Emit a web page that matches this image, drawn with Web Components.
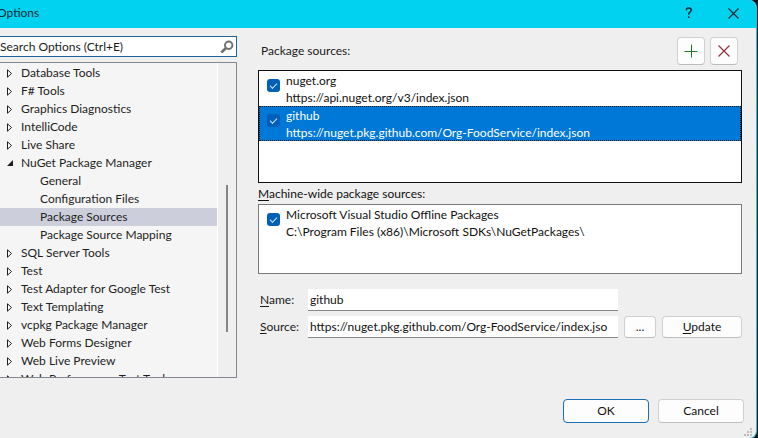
<!DOCTYPE html>
<html lang="en">
<head>
<meta charset="utf-8">
<title>Options</title>
<style>
  html, body { height: 100%; margin: 0; overflow: hidden; }
  body {
    background: linear-gradient(#04181f, #043240 30%, #03262f 60%, #041a22);
    font: 12px/18px Lato, "Open Sans", "Liberation Sans", sans-serif;
    color: #1b1b1b;
  }
</style>
</head>
<body>
<options-dialog></options-dialog>
<script>
const define = (name, html, setup) => {
  const template = document.createElement('template');
  template.innerHTML = '<style>*{box-sizing:border-box}</style>' + html;
  customElements.define(name, class extends HTMLElement {
    constructor() {
      super();
      this.attachShadow({ mode: 'open' }).append(template.content.cloneNode(true));
    }
    connectedCallback() { if (setup) setup(this, this.shadowRoot); }
  });
};

define('title-bar', `
<style>
  :host { display: flex; align-items: center; height: 28px; padding: 0 0 2px 8px; background: #00d2f0; color: #0d2b33; }
  h1 { flex: 1; margin: 0; font: inherit; }
  button { width: 45px; height: 25px; padding: 0; border: 0; background: none; color: #062a33; display: grid; place-items: center; }
</style>
<h1><slot></slot></h1>
<button aria-label="Help"><svg width="8" height="12" viewBox="0 0 8 12" fill="none" stroke="currentColor" stroke-width="1.5"><path d="M1.5 3.2V1.8Q2.4 1 3.8 1Q6.2 1 6.2 3Q6.2 4.300 4.900 5.200Q3.700 6 3.700 7.400V7.800M3.700 9.300V11"/></svg></button>
<button aria-label="Close"><svg width="11" height="11" viewBox="0 0 11 11" stroke="currentColor" stroke-width="1.2"><path d="M.5 .5L10.500 10.500M10.500 .5L.5 10.500"/></svg></button>`);

define('search-box', `
<style>
  :host { display: flex; align-items: center; height: 21px; border: 1px solid #1f6499; background: #fff; padding: 0 2px; }
  input { flex: 1; min-width: 0; height: 18px; padding: 0; border: 0; outline: 0; background: none; font: inherit; color: #1b1b1b; }
  input::placeholder { color: #1b1b1b; opacity: 1; }
</style>
<input type="text" aria-label="Search Options" placeholder="Search Options (Ctrl+E)">
<svg width="14" height="14" viewBox="0 0 14 14" fill="none" stroke="#717171" aria-hidden="true"><circle cx="8.700" cy="5.200" r="3.700" stroke-width="2"/><path d="M6 8L1.300 12.500" stroke-width="2.600"/></svg>`);

define('tree-item', `
<style>
  :host { display: flex; align-items: center; height: 18px; flex: none; padding-left: 9px; white-space: nowrap; color: #1e1e1e; }
  :host([level="2"]) { padding-left: 28px; }
  :host([selected]) { background: #cccedb; }
  .arrow { width: 14px; height: 9px; display: flex; }
  .open { display: none; }
  :host([expanded]) .open { display: block; }
  :host([expanded]) .closed { display: none; }
  :host([level="2"]) svg { display: none; }
</style>
<span class="arrow" aria-hidden="true">
  <svg class="closed" width="7" height="9" viewBox="0 0 7 9" fill="#fff" stroke="#1e1e1e"><path d="M.5 .8V8.200L4.500 4.500Z"/></svg>
  <svg class="open" width="7" height="9" viewBox="0 0 7 9" fill="#1e1e1e"><path d="M6 1V7H0Z"/></svg>
</span>
<slot></slot>`, el => el.setAttribute('role', 'treeitem'));

define('nav-tree', `
<style>
  :host { display: flex; min-height: 0; border: 1px solid #828790; background: #f5f5f5; overflow: hidden; }
  .items { flex: 1; display: flex; flex-direction: column; min-width: 0; min-height: 0; padding-top: 1px; overflow: hidden; }
  .bar { flex: none; width: 19px; border-left: 1px solid #fff; background: #efefef; display: grid; grid-template-rows: 122fr 146fr 45fr; justify-items: center; }
  .thumb { grid-row: 2; width: 2px; background: #858585; }
</style>
<div class="items" role="tree" aria-label="Option pages"><slot></slot></div>
<div class="bar" aria-hidden="true"><div class="thumb"></div></div>`);

define('source-item', `
<style>
  :host { display: block; padding: 1px 1px 0; color: #111; }
  label { display: grid; grid-template-columns: 13px 1fr; gap: 6px; align-items: start; padding-left: 7px; line-height: 17px; }
  input { appearance: none; width: 13px; height: 13px; margin: 7px 0 0; border-radius: 3px; background: #005fb8; display: grid; place-items: center; }
  input:checked::before { content: ""; width: 6px; height: 3px; border: solid #cfe4f7; border-width: 0 0 1px 1px; transform: rotate(-45deg); margin-bottom: 2px; }
  .text { display: block; min-width: 0; white-space: nowrap; }
  .text span { display: block; }
  :host([selected]) { background: #0078d7; outline: 1px dotted #20160c; outline-offset: -1px; color: #fff; }
</style>
<label><input type="checkbox" checked><span class="text"><span class="name"></span><span class="url"></span></span></label>`,
(el, root) => {
  root.querySelector('.name').textContent = el.getAttribute('name');
  root.querySelector('.url').textContent = el.getAttribute('url');
});

define('source-list', `
<style>
  :host { display: block; border: 1px solid #7a7a7a; background: #fff; overflow: hidden; }
  :host([focused]) { border-color: #111; }
</style>
<slot></slot>`);

define('push-button', `
<style>
  :host { display: flex; height: 22px; }
  button { flex: 1; padding: 0; border: 1px solid #d0d0d0; border-bottom-color: #bcbcbc; border-radius: 4px; background: #fdfdfd; font: inherit; color: #111; display: flex; align-items: center; justify-content: center; }
  :host([primary]) button { border-color: #1a6fb5; }
</style>
<button><slot></slot></button>`, (el, root) => {
  if (el.title) root.querySelector('button').setAttribute('aria-label', el.title);
});

define('text-field', `
<style>
  :host { display: grid; grid-template-columns: 50px 1fr; align-items: center; min-width: 0; }
  label { padding-left: 2px; }
  label::first-letter { text-decoration: underline; text-underline-offset: 2px; }
  input { width: 100%; min-width: 0; height: 22px; padding: 0 3px 0 2px; border: 0; border-bottom: 1px solid #868686; border-radius: 0; outline: 0; background: #fff; font: inherit; color: #111; }
</style>
<label for="field"></label><input id="field" type="text">`, (el, root) => {
  root.querySelector('label').textContent = el.getAttribute('label');
  root.querySelector('input').value = el.getAttribute('value');
});

define('options-dialog', `
<style>
  :host { display: flex; flex-direction: column; height: 100vh; margin: 0 1px 0 -12px; border: solid #35bccb; border-width: 0 1px 1px; border-radius: 0 8px 8px 0; background: #efefef; overflow: hidden; position: relative; }
  .body { flex: 1; min-height: 0; display: grid; grid-template-columns: 240px 1fr; gap: 21px; padding: 8px 14px 21px 8px; }
  .left { display: flex; flex-direction: column; gap: 5px; min-height: 0; }
  nav-tree { flex: 1; }
  .right { display: flex; flex-direction: column; min-width: 0; }
  .head { display: flex; align-items: center; gap: 5px; padding: 1px 4px 5px 3px; }
  .head span { flex: 1; }
  .head push-button { width: 28px; height: 28px; }
  .sources { height: 113px; flex: none; }
  .machine { height: 70px; flex: none; }
  h2 { margin: 0; font: inherit; line-height: 21px; color: #111; }
  u { text-underline-offset: 2px; }
  .form { display: grid; grid-template-columns: 1fr 32px 80px; column-gap: 6px; row-gap: 5px; padding-top: 15px; }
  .name { grid-area: 1 / 1; }
  .source { grid-area: 2 / 1; }
  .form push-button { grid-row: 2; }
  footer { display: flex; justify-content: flex-end; gap: 9px; padding: 0 12px 15px; }
  footer push-button { width: 86px; height: 24px; }
  .grip { position: absolute; right: 3px; bottom: 1px; }
</style>
<title-bar>Options</title-bar>
<div class="body">
  <div class="left">
    <search-box></search-box>
    <nav-tree>
      <tree-item>Database Tools</tree-item>
      <tree-item>F# Tools</tree-item>
      <tree-item>Graphics Diagnostics</tree-item>
      <tree-item>IntelliCode</tree-item>
      <tree-item>Live Share</tree-item>
      <tree-item expanded>NuGet Package Manager</tree-item>
      <tree-item level="2">General</tree-item>
      <tree-item level="2">Configuration Files</tree-item>
      <tree-item level="2" selected>Package Sources</tree-item>
      <tree-item level="2">Package Source Mapping</tree-item>
      <tree-item>SQL Server Tools</tree-item>
      <tree-item>Test</tree-item>
      <tree-item>Test Adapter for Google Test</tree-item>
      <tree-item>Text Templating</tree-item>
      <tree-item>vcpkg Package Manager</tree-item>
      <tree-item>Web Forms Designer</tree-item>
      <tree-item>Web Live Preview</tree-item>
      <tree-item>Web Performance Test Tools</tree-item>
    </nav-tree>
  </div>
  <div class="right">
    <div class="head">
      <span>Package sources:</span>
      <push-button title="Add"><svg width="14" height="14" viewBox="0 0 14 14" stroke="#1f7a2c"><path d="M.5 7.500H13.500M7.500 .5V13.500"/></svg></push-button>
      <push-button title="Remove"><svg width="12" height="12" viewBox="0 0 12 12" stroke="#93353a" stroke-width="1.200"><path d="M.5 .5L11.500 11.500M11.500 .5L.5 11.500"/></svg></push-button>
    </div>
    <source-list class="sources" focused>
      <source-item name="nuget.org" url="https://api.nuget.org/v3/index.json"></source-item>
      <source-item selected name="github" url="https://nuget.pkg.github.com/Org-FoodService/index.json"></source-item>
    </source-list>
    <h2><u>M</u>achine-wide package sources:</h2>
    <source-list class="machine">
      <source-item name="Microsoft Visual Studio Offline Packages" url="C:\\Program Files (x86)\\Microsoft SDKs\\NuGetPackages\\"></source-item>
    </source-list>
    <div class="form">
      <text-field class="name" label="Name:" value="github"></text-field>
      <text-field class="source" label="Source:" value="https://nuget.pkg.github.com/Org-FoodService/index.jso"></text-field>
      <push-button>...</push-button>
      <push-button><span><u>U</u>pdate</span></push-button>
    </div>
  </div>
</div>
<footer>
  <push-button primary>OK</push-button>
  <push-button>Cancel</push-button>
</footer>
<svg class="grip" width="9" height="9" viewBox="0 0 9 9" fill="#bdbdbd" aria-hidden="true"><path d="M6 0h2v2h-2zM3 3h2v2h-2zM6 3h2v2h-2zM0 6h2v2h-2zM3 6h2v2h-2zM6 6h2v2h-2z"/></svg>`);
</script>
</body>
</html>
